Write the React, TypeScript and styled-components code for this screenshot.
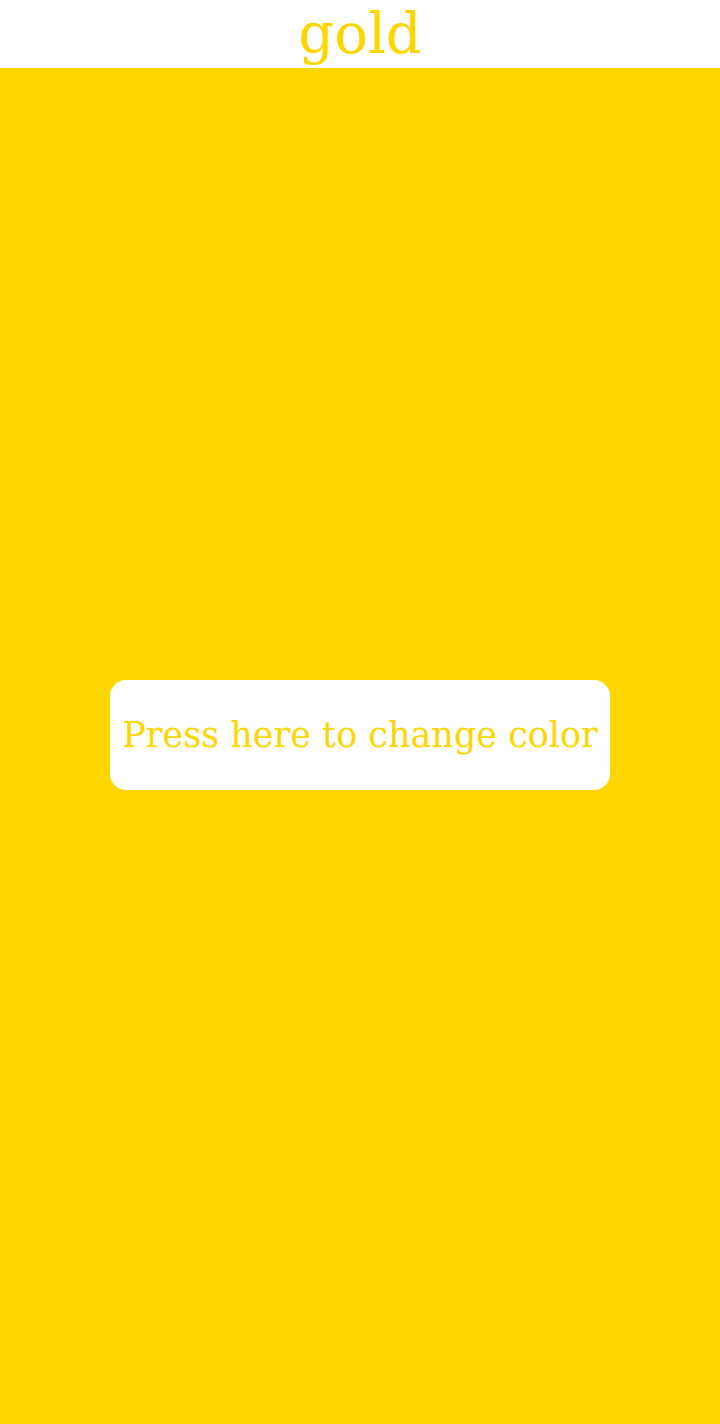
import React, { useState } from 'react'
import styled, { createGlobalStyle } from 'styled-components'

const GlobalStyle = createGlobalStyle`
	html, body {
		margin: 0;
		padding: 0;
		background: #ffffff;
	}
	#root {
		min-height: 100vh;
	}
`;

const colors = ['#fdd600', '#ff6347', '#4682b4', '#3cb371'];
const names = ['gold', 'tomato', 'steelblue', 'mediumseagreen'];

const Screen = styled.div`
	display: flex;
	flex-direction: column;
	height: 100vh;
	font-family: "DejaVu Serif", "Liberation Serif", serif;
`;

const Header = styled.div<{ $color: string }>`
	height: 68px;
	display: flex;
	justify-content: center;
	align-items: flex-end;
	background: #ffffff;
	color: ${(p) => p.$color};
	font-size: 56px;
	line-height: 68px;
	overflow: hidden;
`;

const Stage = styled.div<{ $color: string }>`
	flex: 1;
	display: flex;
	align-items: center;
	justify-content: center;
	padding-bottom: 22px;
	background: ${(p) => p.$color};
`;

const ChangeButton = styled.button<{ $color: string }>`
	width: 500px;
	height: 110px;
	border: none;
	border-radius: 16px;
	background: #ffffff;
	color: ${(p) => p.$color};
	font-family: inherit;
	font-size: 35px;
	white-space: nowrap;
	padding: 0;
	cursor: pointer;
`;

const App: React.FC = () => {
	const [index, setIndex] = useState(0);
	const color = colors[index];
	return (
		<Screen>
			<GlobalStyle />
			<Header $color={color}>{names[index]}</Header>
			<Stage $color={color}>
				<ChangeButton
					$color={color}
					onClick={() => setIndex((index + 1) % colors.length)}
				>
					Press here to change color
				</ChangeButton>
			</Stage>
		</Screen>
	);
};

export default App;
